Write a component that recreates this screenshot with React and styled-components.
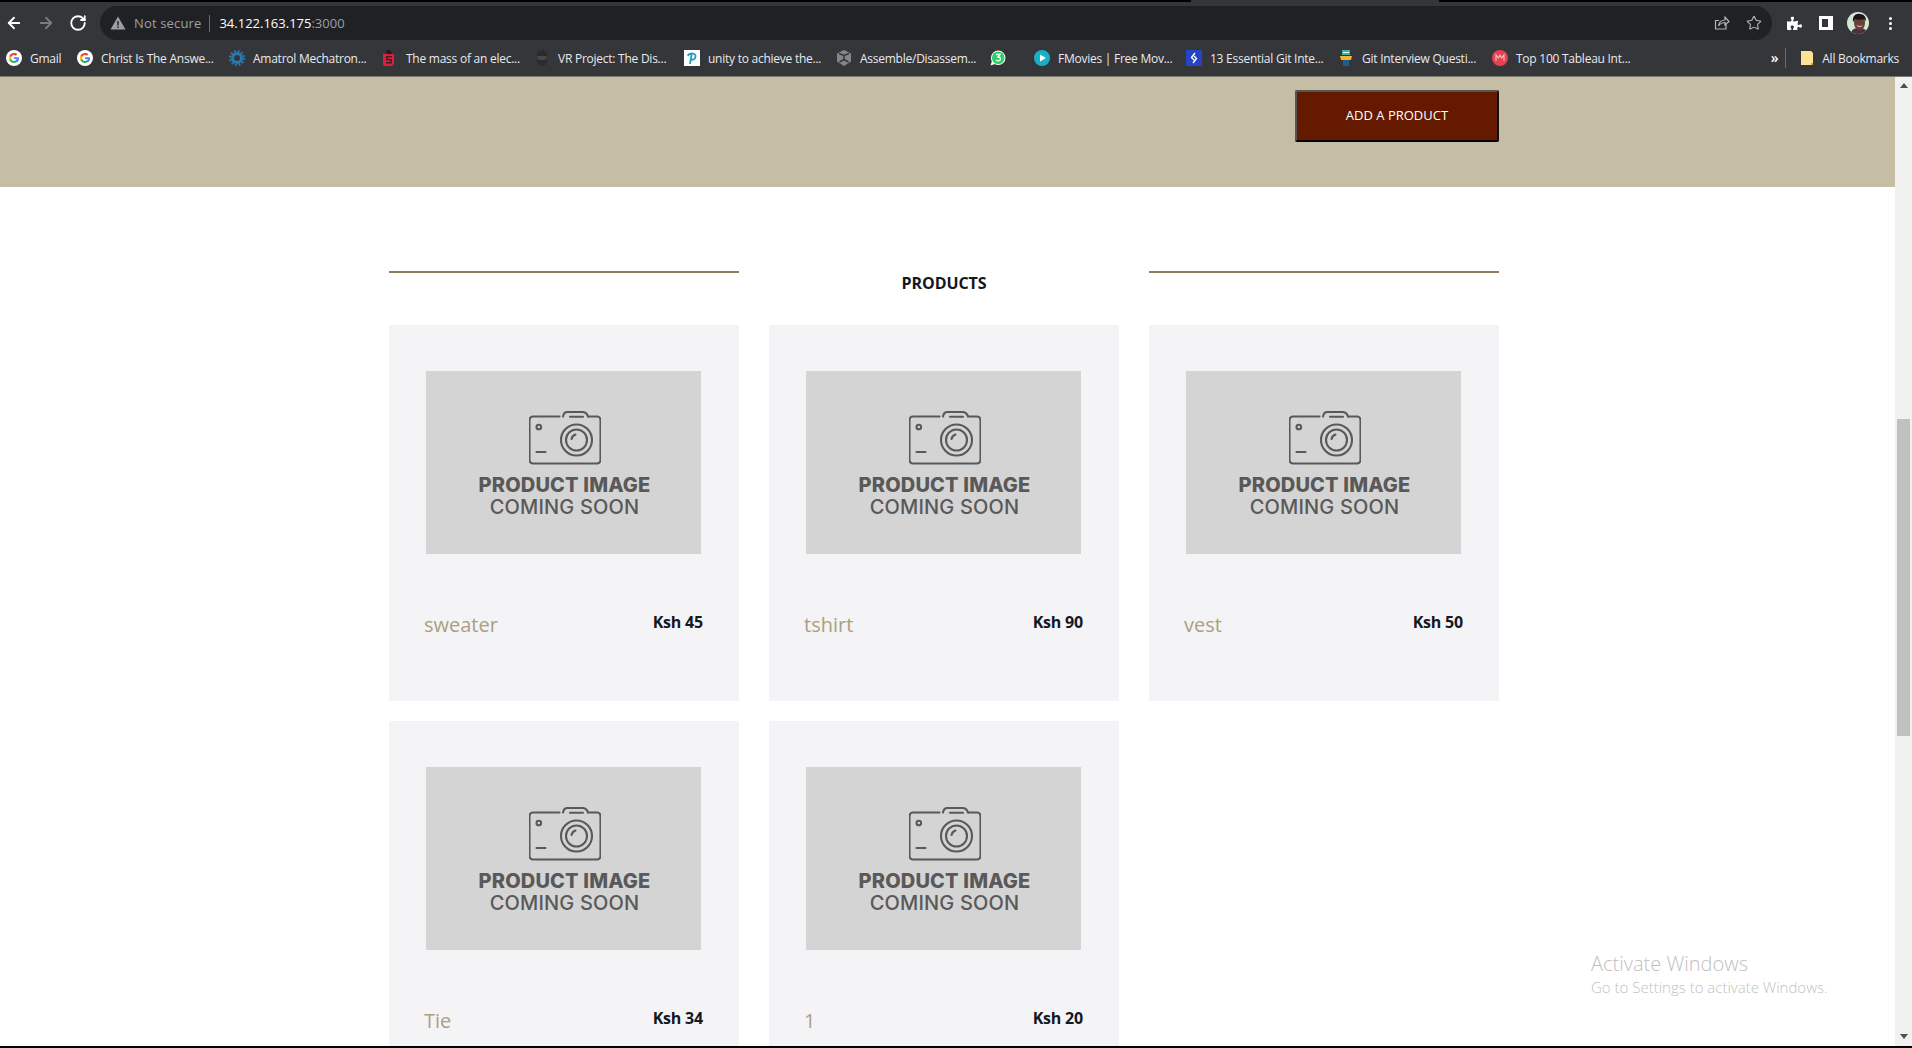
import React from 'react';
import styled, { createGlobalStyle } from 'styled-components';
import { ArrowLeft, ArrowRight, RotateCw, Star } from 'lucide-react';
import { FaPuzzlePiece } from 'react-icons/fa';

const GlobalStyle = createGlobalStyle`
    html, body {
        margin: 0;
        height: 100%;
        overflow: hidden;
        background: #fff;
        font-family: "Open Sans", "Liberation Sans", sans-serif;
    }
`;

const Screen = styled.div`
    width: 1912px;
    height: 1048px;
    display: flex;
    flex-direction: column;
    overflow: hidden;
`;

const TabStrip = styled.div`
    height: 2px;
    flex: none;
    background: linear-gradient(to right, #000 1191px, #35363a 1191px, #35363a 1439px, #000 1439px);
`;

const Toolbar = styled.div`
    height: 38px;
    flex: none;
    box-sizing: border-box;
    padding-top: 4px;
    display: flex;
    align-items: flex-start;
    background: #35363a;
`;

const NavButtons = styled.div`
    width: 100px;
    height: 34px;
    flex: none;
    box-sizing: border-box;
    padding-left: 5px;
    display: flex;
    align-items: center;
    gap: 14px;
`;

const NavIcon = styled.span`
    display: flex;
    color: ${(props) => (props.$off ? '#7b7c7f' : '#fff')};
`;

const Omnibox = styled.div`
    width: 1672px;
    height: 34px;
    flex: none;
    box-sizing: border-box;
    padding: 0 10px;
    display: flex;
    align-items: center;
    border-radius: 17px;
    background: #202124;
    font-size: 13px;
`;

const Security = styled.span`
    margin-left: 8px;
    padding-right: 8px;
    border-right: 1px solid #6a6b6e;
    color: #9aa0a6;
    letter-spacing: 0.15px;
    line-height: 17px;
`;

const Host = styled.span`
    margin-left: 9px;
    color: #fff;
`;

const Port = styled.span`
    color: #9aa0a6;
`;

const OmniActions = styled.div`
    margin-left: auto;
    display: flex;
    align-items: center;
    gap: 16px;
    color: #b4b6b9;
`;

const ChromeActions = styled.div`
    flex: 1;
    height: 34px;
    box-sizing: border-box;
    padding-left: 15px;
    display: grid;
    grid-template-columns: 32px 28px 42px auto;
    align-items: center;
    color: #fff;
`;

const PanelIcon = styled.span`
    display: block;
    width: 14px;
    height: 14px;
    box-sizing: border-box;
    border: solid #fff;
    border-width: 3px 5px 3px 3px;
`;

const Dots = styled.span`
    display: flex;
    flex-direction: column;
    gap: 2px;
    span {
        width: 3px;
        height: 3px;
        border-radius: 50%;
        background: #fff;
    }
`;

const BookmarkBar = styled.div`
    height: 37px;
    flex: none;
    box-sizing: border-box;
    padding-left: 6px;
    display: flex;
    align-items: center;
    gap: 16px;
    background: #35363a;
    border-bottom: 1px solid #78786f;
    color: #e8eaed;
    font-size: 12px;
    letter-spacing: -0.25px;
    white-space: nowrap;
`;

const Bookmark = styled.div`
    display: flex;
    align-items: center;
    gap: 8px;
    flex: none;
`;

const BookmarkLabel = styled.span`
    display: block;
    width: ${(props) => props.$width}px;
`;

const BookmarkEnd = styled.div`
    margin-left: auto;
    display: flex;
    align-items: center;
    padding-right: 13px;
`;

const Chevrons = styled.span`
    font-size: 14px;
    line-height: 14px;
    font-weight: 600;
    color: #fff;
    margin-right: 7px;
`;

const Divider = styled.span`
    width: 1px;
    height: 20px;
    background: #6a6b6e;
    margin-right: 14px;
`;

const Viewport = styled.div`
    flex: 1;
    min-height: 0;
    display: flex;
    position: relative;
`;

const Page = styled.main`
    flex: 1;
    min-width: 0;
    overflow: hidden;
    background: #fff;
`;

const Banner = styled.section`
    height: 110px;
    box-sizing: border-box;
    padding: 13px 0 0 1295px;
    background: #c5bea5;
`;

const AddButton = styled.button`
    width: 204px;
    height: 52px;
    padding: 0 0 2px;
    box-sizing: border-box;
    border: 2px solid;
    border-color: #555 #111 #000 #555;
    border-radius: 2px;
    background: #651a00;
    color: #fff;
    font-family: "Open Sans", sans-serif;
    font-size: 13px;
`;

const Container = styled.div`
    width: 1110px;
    margin-left: 389px;
`;

const SectionHead = styled.div`
    display: grid;
    grid-template-columns: 350px 1fr 350px;
    padding-top: 84px;
    height: 54px;
`;

const HeadRule = styled.div`
    height: 2px;
    background: #8c7f5e;
`;

const HeadTitle = styled.h2`
    margin: 2px 0 0;
    text-align: center;
    font-size: 16px;
    line-height: 20px;
    font-weight: 700;
    letter-spacing: -0.1px;
    color: #14181f;
`;

const ProductGrid = styled.div`
    display: grid;
    grid-template-columns: repeat(3, 350px);
    grid-auto-rows: 376px;
    gap: 20px 30px;
`;

const Card = styled.article`
    box-sizing: border-box;
    padding: 46px 36px 0 35px;
    background: #f4f4f6;
`;

const Placeholder = styled.div`
    width: 275px;
    height: 183px;
    margin-left: 2px;
    box-sizing: border-box;
    padding: 40px 0 0 2px;
    display: flex;
    flex-direction: column;
    align-items: center;
    background: #d4d4d4;
    color: #595959;
    font-family: Inter, "Liberation Sans", sans-serif;
`;

const PlaceholderBold = styled.span`
    margin-top: 9px;
    font-size: 20px;
    line-height: 23px;
    font-weight: 800;
    letter-spacing: 0.15px;
`;

const PlaceholderThin = styled.span`
    margin-top: -1px;
    font-size: 20px;
    line-height: 23px;
    font-weight: 500;
    letter-spacing: 0.15px;
`;

const CardFooter = styled.div`
    margin-top: 57px;
    display: flex;
    justify-content: space-between;
    align-items: flex-start;
`;

const ProductName = styled.span`
    font-size: 20px;
    line-height: 27px;
    color: #ac9f80;
`;

const ProductPrice = styled.span`
    font-size: 16px;
    line-height: 22px;
    font-weight: 700;
    letter-spacing: -0.2px;
    color: #14181f;
`;

const Watermark = styled.div`
    position: absolute;
    left: 1591px;
    top: 874px;
    color: #bfbfbf;
    font-weight: 300;
    white-space: nowrap;
`;

const WatermarkTitle = styled.div`
    font-size: 20px;
    line-height: 26px;
`;

const WatermarkText = styled.div`
    font-size: 15px;
    line-height: 20px;
`;

const Scrollbar = styled.div`
    width: 17px;
    flex: none;
    box-sizing: border-box;
    padding: 6px 2px;
    display: flex;
    flex-direction: column;
    align-items: center;
    background: #f1f1f1;
`;

const ScrollArrow = styled.span`
    width: 0;
    height: 0;
    flex: none;
    border-left: 4px solid transparent;
    border-right: 4px solid transparent;
    border-${(props) => (props.$down ? 'top' : 'bottom')}: 5px solid #505050;
`;

const ScrollThumb = styled.div`
    width: 13px;
    height: 317px;
    flex: none;
    margin: 331px 0 298px;
    background: #c1c1c1;
`;

const BottomEdge = styled.div`
    height: 2px;
    flex: none;
    background: #000;
`;

const GoogleIcon = () => (
    <svg width="16" height="16" viewBox="0 0 16 16">
        <circle cx="8" cy="8" r="8" fill="#fff" />
        <path d="M13 8.2c0-.4 0-.7-.1-1H8v1.9h2.8c-.1.6-.5 1.200-1 1.500v1.300h1.700c1-.9 1.500-2.200 1.500-3.700z" fill="#4285f4" />
        <path d="M8 13c1.400 0 2.500-.5 3.400-1.200l-1.700-1.300c-.5.300-1 .5-1.700.5-1.300 0-2.400-.9-2.800-2.100H3.500v1.400C4.300 11.900 6 13 8 13z" fill="#34a853" />
        <path d="M5.200 8.900c-.2-.6-.2-1.200 0-1.800V5.700H3.500c-.7 1.400-.7 3.200 0 4.600l1.700-1.400z" fill="#fbbc05" />
        <path d="M8 5c.8 0 1.400.3 1.900.8l1.500-1.500C10.500 3.500 9.400 3 8 3 6 3 4.300 4.100 3.500 5.700l1.700 1.400C5.600 5.900 6.700 5 8 5z" fill="#ea4335" />
    </svg>
);

const GearIcon = () => (
    <svg width="16" height="16" viewBox="0 0 16 16">
        <circle cx="8" cy="8" r="4.500" fill="none" stroke="#2a7ab0" strokeWidth="3" />
        <circle cx="8" cy="8" r="7" fill="none" stroke="#2a7ab0" strokeWidth="2" strokeDasharray="2 1.700" />
    </svg>
);

const MassIcon = () => (
    <svg width="16" height="16" viewBox="0 0 16 16">
        <path d="M1 4h11v10l-2 2H2l-1-1z" fill="#d8203c" />
        <path d="M4 6h6v1.500H5.500V9H10v4.500H4V12h4.500v-1.500H4z" fill="#4a1a24" />
        <path d="M4 0h4l2 3-1 1H5z" fill="#26191c" />
    </svg>
);

const VrIcon = () => (
    <svg width="16" height="16" viewBox="0 0 16 16">
        <path d="M3 4c0-5 10-5 10 0v8c0 5-10 5-10 0z" fill="#2a2b2d" />
        <path d="M3.500 6h9v3l-2 1H5.500l-2-1z" fill="#47484b" />
    </svg>
);

const PIcon = () => (
    <svg width="16" height="16" viewBox="0 0 16 16">
        <rect width="16" height="16" fill="#fff" />
        <path d="M6 14l1.700-10M3.500 5.500c3-3 8.500-2.500 8 1S8.500 10 7 9.500" fill="none" stroke="#1d9fc4" strokeWidth="1.800" />
    </svg>
);

const UnityIcon = () => (
    <svg width="16" height="16" viewBox="0 0 16 16">
        <path d="M8 0l7 3.500v8L8 16l-7-4.500v-8z" fill="#85868a" />
        <path d="M8 5.500v4M8 9.500L3.500 12M8 9.500l4.500 2.500M3 3.500l5 2 5-2" stroke="#35363a" strokeWidth="1.500" fill="none" />
    </svg>
);

const WhatsappIcon = () => (
    <svg width="16" height="16" viewBox="0 0 16 16">
        <circle cx="8.200" cy="7.800" r="7.300" fill="#fff" />
        <circle cx="8.200" cy="7.800" r="6.300" fill="#25d366" />
        <path d="M.5 15.500l1.500-4.500 3 3z" fill="#fff" />
        <path d="M6 4.500h4l-2 2.500c2 0 2.500 1 2.500 2 0 2-3.500 2.500-4.500 1" fill="none" stroke="#fff" strokeWidth="1.300" />
    </svg>
);

const PlayIcon = () => (
    <svg width="16" height="16" viewBox="0 0 16 16">
        <circle cx="8" cy="8" r="8" fill="#18b0c8" />
        <path d="M6 4.500l6 3.500-6 3.500z" fill="#fff" />
    </svg>
);

const BlueIcon = () => (
    <svg width="16" height="16" viewBox="0 0 16 16">
        <rect width="16" height="16" fill="#2444c4" />
        <path d="M9 3L5.500 7.500 8 10M7 13l3.500-4.500L8 6" fill="none" stroke="#fff" strokeWidth="1.400" />
    </svg>
);

const StackIcon = () => (
    <svg width="16" height="16" viewBox="0 0 16 16">
        <rect x="4" y="0" width="8" height="5" fill="#3fb0a0" />
        <rect x="5" y="2" width="6" height="1" fill="#dff" />
        <path d="M2 6h12l-1 4H3z" fill="#f2b632" />
        <rect x="5" y="10" width="6" height="6" fill="#1e5e8c" />
    </svg>
);

const TableauIcon = () => (
    <svg width="16" height="16" viewBox="0 0 16 16">
        <circle cx="8" cy="8" r="8" fill="#e8414e" />
        <path d="M4 11V5l2.500 3L8 5l1.500 3L12 5v6" fill="none" stroke="#f5b5ba" strokeWidth="1.200" />
    </svg>
);

const FolderIcon = () => (
    <svg width="14" height="16" viewBox="0 0 14 16">
        <path d="M0 1h10l2 2v12H0z" fill="#fde293" transform="translate(1 0)" />
        <path d="M11 13h2v2h-2z" fill="#c9a93f" />
    </svg>
);

const ShareIcon = () => (
    <svg width="16" height="16" viewBox="0 0 16 16" fill="none" stroke="currentColor" strokeWidth="1.200">
        <path d="M12 9v5H1.500V5.500H5" />
        <path d="M4.500 11c.5-4 3-6 6.500-6V2l4 4.500L11 10V7.500c-3 0-5 1-6.500 3.500z" />
    </svg>
);

const Avatar = () => (
    <svg width="22" height="22" viewBox="0 0 22 22">
        <defs>
            <clipPath id="avatar-clip"><circle cx="11" cy="11" r="11" /></clipPath>
        </defs>
        <g clipPath="url(#avatar-clip)">
            <rect width="22" height="22" fill="#cfe8d0" />
            <path d="M4 22c0-4 3-6 8-6s8 2 8 6z" fill="#4a3038" />
            <path d="M7 10c0-4 2-6 5.500-6S18 6 18 10c0 5-2 8-5.500 8S7 15 7 10z" fill="#6b3f38" />
            <path d="M6 10c-1-6 3-9 7-8 4 0 6 3 6 7l-2-2c-3 1-7 1-9 0z" fill="#1c1517" />
            <path d="M9.500 13c2 1.500 4.500 1.500 6 0-.5 2.500-5 2.500-6 0z" fill="#e8e0d8" />
        </g>
    </svg>
);

const CameraIcon = () => (
    <svg width="72" height="54" viewBox="0 0 72 54" fill="none" stroke="currentColor" strokeWidth="2.100" strokeLinecap="round" strokeLinejoin="round">
        <path d="M30.500 5.500H4a3.500 3.500 0 0 0-3.500 3.500v40a3.500 3.500 0 0 0 3.500 3.500h64a3.500 3.500 0 0 0 3.500-3.500V9A3.500 3.500 0 0 0 68 5.500h-9" />
        <path d="M34 5.500c.5-3 2-4.500 4.500-4.500h15c2.500 0 4.500 1.500 5.500 4.500" />
        <path d="M41 5.700h13" />
        <circle cx="47.500" cy="29" r="15.500" />
        <circle cx="47.500" cy="29" r="10.500" />
        <path d="M42.500 28a6 6 0 0 1 4-4.500" />
        <circle cx="9.800" cy="16" r="2.300" />
        <path d="M7.500 41h9" />
    </svg>
);

const bookmarks = [
    { icon: <GoogleIcon />, label: 'Gmail', width: 31 },
    { icon: <GoogleIcon />, label: 'Christ Is The Answe...', width: 112 },
    { icon: <GearIcon />, label: 'Amatrol Mechatron...', width: 113 },
    { icon: <MassIcon />, label: 'The mass of an elec...', width: 112 },
    { icon: <VrIcon />, label: 'VR Project: The Dis...', width: 110 },
    { icon: <PIcon />, label: 'unity to achieve the...', width: 112 },
    { icon: <UnityIcon />, label: 'Assemble/Disassem...', width: 114 },
    { icon: <WhatsappIcon />, label: '', width: 4 },
    { icon: <PlayIcon />, label: 'FMovies | Free Mov...', width: 112 },
    { icon: <BlueIcon />, label: '13 Essential Git Inte...', width: 112 },
    { icon: <StackIcon />, label: 'Git Interview Questi...', width: 114 },
    { icon: <TableauIcon />, label: 'Top 100 Tableau Int...', width: 113 },
];

const products = [
    { name: 'sweater', price: 45 },
    { name: 'tshirt', price: 90 },
    { name: 'vest', price: 50 },
    { name: 'Tie', price: 34 },
    { name: '1', price: 20 },
];

const App = () => (
    <Screen>
        <GlobalStyle />
        <TabStrip />
        <Toolbar>
            <NavButtons>
                <NavIcon><ArrowLeft size={18} strokeWidth={2.4} /></NavIcon>
                <NavIcon $off><ArrowRight size={18} strokeWidth={2.4} /></NavIcon>
                <NavIcon><RotateCw size={18} strokeWidth={2.4} /></NavIcon>
            </NavButtons>
            <Omnibox>
                <svg width="16" height="16" viewBox="0 0 16 16"><path d="M8 1.500L15.500 14.500H.5z" fill="#9aa0a6" /><path d="M7.300 6h1.400v4.500H7.300zM7.300 11.500h1.400V13H7.300z" fill="#202124" /></svg>
                <Security>Not secure</Security>
                <Host>34.122.163.175<Port>:3000</Port></Host>
                <OmniActions>
                    <ShareIcon />
                    <Star size={16} strokeWidth={1.6} />
                </OmniActions>
            </Omnibox>
            <ChromeActions>
                <FaPuzzlePiece size={15} />
                <PanelIcon />
                <Avatar />
                <Dots><span /><span /><span /></Dots>
            </ChromeActions>
        </Toolbar>
        <BookmarkBar>
            {bookmarks.map((b, i) => (
                <Bookmark key={i}>
                    {b.icon}
                    <BookmarkLabel $width={b.width}>{b.label}</BookmarkLabel>
                </Bookmark>
            ))}
            <BookmarkEnd>
                <Chevrons>»</Chevrons>
                <Divider />
                <Bookmark>
                    <FolderIcon />
                    <span>All Bookmarks</span>
                </Bookmark>
            </BookmarkEnd>
        </BookmarkBar>
        <Viewport>
            <Page>
                <Banner>
                    <AddButton>ADD A PRODUCT</AddButton>
                </Banner>
                <Container>
                    <SectionHead>
                        <HeadRule />
                        <HeadTitle>PRODUCTS</HeadTitle>
                        <HeadRule />
                    </SectionHead>
                    <ProductGrid>
                        {products.map((p) => (
                            <Card key={p.name}>
                                <Placeholder>
                                    <CameraIcon />
                                    <PlaceholderBold>PRODUCT IMAGE</PlaceholderBold>
                                    <PlaceholderThin>COMING SOON</PlaceholderThin>
                                </Placeholder>
                                <CardFooter>
                                    <ProductName>{p.name}</ProductName>
                                    <ProductPrice>Ksh {p.price}</ProductPrice>
                                </CardFooter>
                            </Card>
                        ))}
                    </ProductGrid>
                </Container>
            </Page>
            <Scrollbar>
                <ScrollArrow />
                <ScrollThumb />
                <ScrollArrow $down />
            </Scrollbar>
            <Watermark>
                <WatermarkTitle>Activate Windows</WatermarkTitle>
                <WatermarkText>Go to Settings to activate Windows.</WatermarkText>
            </Watermark>
        </Viewport>
        <BottomEdge />
    </Screen>
);

export default App;
